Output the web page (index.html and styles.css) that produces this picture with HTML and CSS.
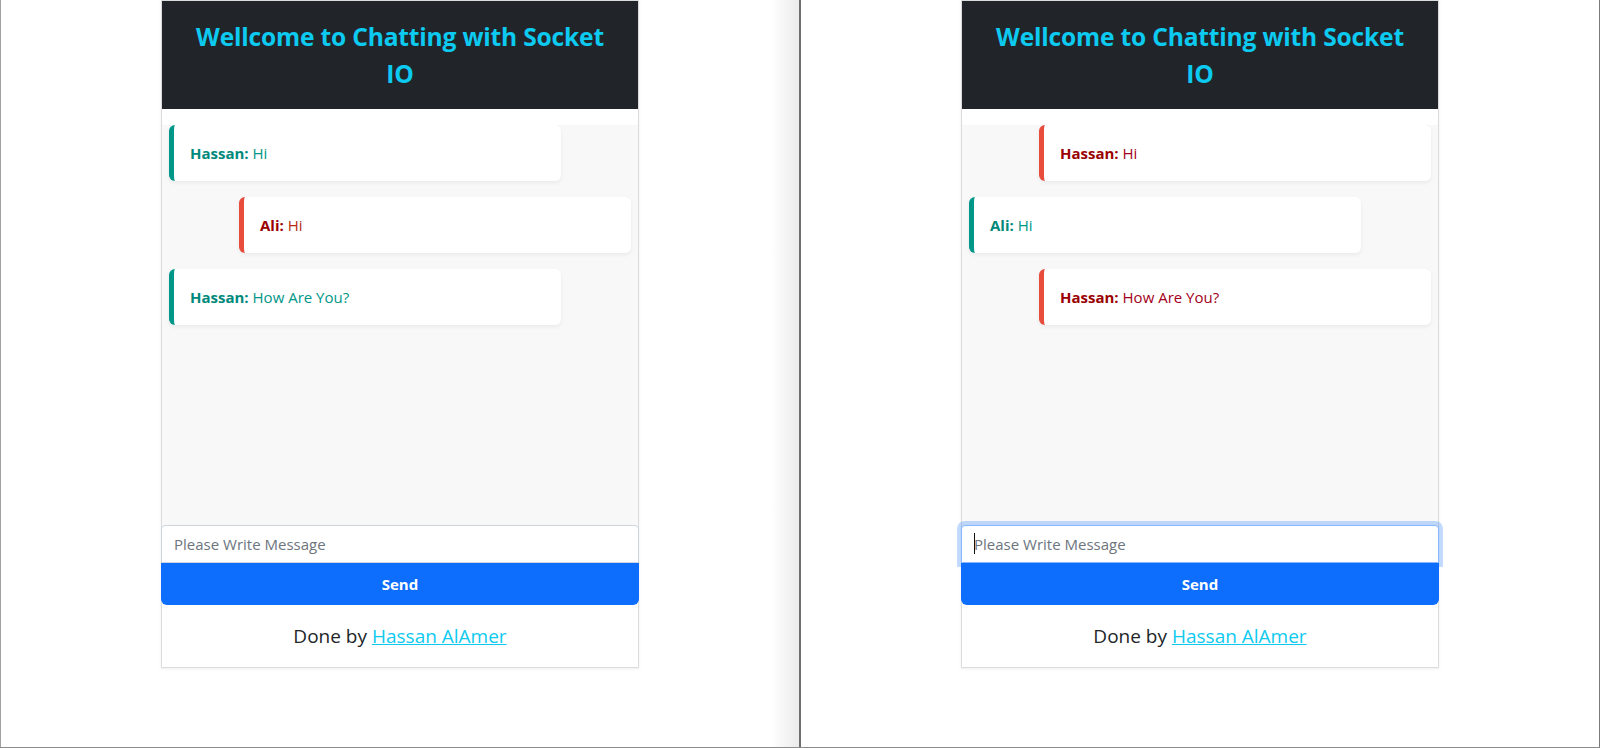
FILE: index.html
```html
<!DOCTYPE html>
<html lang="en">
<head>
<meta charset="utf-8">
<title>Chatting with Socket IO</title>
<link rel="stylesheet" href="styles.css">
</head>
<body>
<div class="desktop">
  <section class="window window-left">
    <div class="card">
      <header class="card-header"><h2 class="title">Wellcome to Chatting with Socket IO</h2></header>
      <div class="card-body">
        <div class="chat">
          <div class="msg msg-green msg-left"><b>Hassan:</b> Hi</div>
          <div class="msg msg-red msg-right"><b>Ali:</b> Hi</div>
          <div class="msg msg-green msg-left"><b>Hassan:</b> How Are You?</div>
        </div>
      </div>
      <div class="input-wrap">
        <input class="msg-input" type="text" placeholder="Please Write Message">
      </div>
      <button class="send" type="button">Send</button>
      <footer class="card-footer">Done by <a href="#">Hassan AlAmer</a></footer>
    </div>
  </section>
  <div class="divider"></div>
  <section class="window window-right">
    <div class="card">
      <header class="card-header"><h2 class="title">Wellcome to Chatting with Socket IO</h2></header>
      <div class="card-body">
        <div class="chat">
          <div class="msg msg-red msg-right"><b>Hassan:</b> Hi</div>
          <div class="msg msg-green msg-left"><b>Ali:</b> Hi</div>
          <div class="msg msg-red msg-right"><b>Hassan:</b> How Are You?</div>
        </div>
      </div>
      <div class="input-wrap">
        <input class="msg-input focused" type="text" placeholder="Please Write Message">
        <span class="caret"></span>
      </div>
      <button class="send" type="button">Send</button>
      <footer class="card-footer">Done by <a href="#">Hassan AlAmer</a></footer>
    </div>
  </section>
</div>
</body>
</html>
```

FILE: styles.css
```css
* { box-sizing: border-box; }

html, body {
  margin: 0;
  padding: 0;
  background: #ffffff;
}

body {
  font-family: "Open Sans", "Noto Sans", "Liberation Sans", sans-serif;
  color: #212529;
  overflow: hidden;
}

.desktop {
  display: flex;
  width: 1600px;
  height: 748px;
  border-bottom: 1px solid #8c8c8c;
}

.window {
  height: 747px;
  display: flex;
  flex-direction: column;
  align-items: center;
}

.window-left {
  width: 799px;
  border-left: 1px solid #a0a0a0;
  background: linear-gradient(to right, #ffffff calc(100% - 28px), #ebebeb);
}

.window-right {
  width: 799px;
  border-right: 1px solid #7a7a7a;
}

.divider {
  width: 2px;
  height: 747px;
  background: #6e6e6e;
}

.card {
  width: 478px;
  background: #ffffff;
  border: 1px solid #dcdcdc;
  box-shadow: 0 1px 3px rgba(0, 0, 0, 0.07);
  display: flex;
  flex-direction: column;
}

.card-header {
  background: #212529;
  height: 108px;
  padding: 17px 20px 0;
  text-align: center;
}

.title {
  margin: 0;
  color: #0dcaf0;
  font-size: 24.6px;
  line-height: 37px;
  font-weight: 700;
  letter-spacing: -0.2px;
}

.card-body {
  padding-top: 16px;
}

.chat {
  height: 400px;
  background: #f8f8f8;
  display: flex;
  flex-direction: column;
  gap: 16px;
  padding: 0 7px;
}

.msg {
  width: 392px;
  height: 56px;
  background: #ffffff;
  border-radius: 6px;
  border-left: 5px solid;
  box-shadow: 0 2px 4px rgba(0, 0, 0, 0.06);
  padding: 0 16px;
  display: flex;
  align-items: center;
  font-size: 15px;
  white-space: pre;
}

.msg b { font-weight: 700; }

.msg-left { align-self: flex-start; }
.msg-right { align-self: flex-end; }

.msg-green {
  border-left-color: #009688;
  color: #009688;
}
.msg-green b { color: #00897b; }

.msg-red {
  border-left-color: #e74c3c;
  color: #a3001b;
}
.msg-red b { color: #9b0000; }

.window-left .msg-red { color: #b8280f; }

.input-wrap {
  position: relative;
  margin: 0 -1px;
}

.msg-input {
  display: block;
  width: 100%;
  height: 38px;
  border: 1px solid #ced4da;
  border-radius: 4px 4px 0 0;
  padding: 0 12px;
  font-family: inherit;
  font-size: 15px;
  color: #212529;
  background: #ffffff;
  outline: none;
}

.msg-input::placeholder {
  color: #6c757d;
}

.msg-input.focused {
  border-color: #86b7fe;
  box-shadow: 0 0 0 4px rgba(13, 110, 253, 0.25);
}

.caret {
  position: absolute;
  left: 13px;
  top: 8px;
  width: 1px;
  height: 21px;
  background: #111;
}

.send {
  display: block;
  margin: 0 -1px;
  width: calc(100% + 2px);
  height: 42px;
  border: none;
  border-radius: 0 0 6px 6px;
  background: #0d6efd;
  color: #ffffff;
  font-family: inherit;
  font-size: 15px;
  font-weight: 700;
  position: relative;
}

.card-footer {
  height: 62px;
  display: flex;
  align-items: center;
  justify-content: center;
  gap: 5px;
  font-size: 19px;
  color: #212529;
}

.card-footer a {
  color: #0dcaf0;
  text-decoration: underline;
}
```
